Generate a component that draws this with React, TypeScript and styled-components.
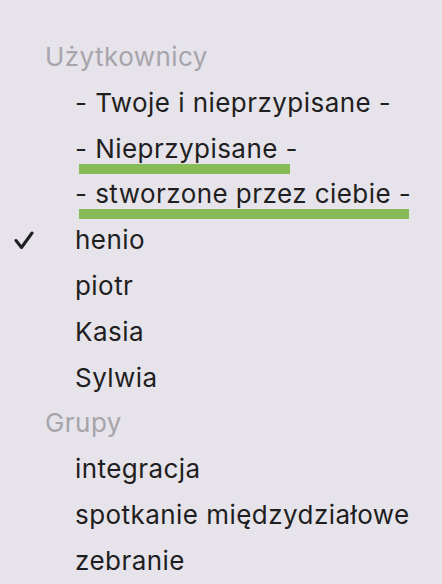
import React from "react";
import styled, { createGlobalStyle } from "styled-components";

const GlobalStyle = createGlobalStyle`
  html, body {
    margin: 0;
    padding: 0;
    background: #e6e3ea;
  }
  body {
    font-family: Inter, "Liberation Sans", sans-serif;
    -webkit-font-smoothing: antialiased;
  }
`;

type Entry = { label: string; checked?: boolean; mark?: number };

const users: Entry[] = [
  { label: "- Twoje i nieprzypisane -" },
  { label: "- Nieprzypisane -", mark: 211 },
  { label: "- stworzone przez ciebie -", mark: 330 },
  { label: "henio", checked: true },
  { label: "piotr" },
  { label: "Kasia" },
  { label: "Sylwia" },
];

const groups: Entry[] = [
  { label: "integracja" },
  { label: "spotkanie międzydziałowe" },
  { label: "zebranie" },
];

const App = () => {
  return (
    <>
      <GlobalStyle />
      <Menu>
        <Header>Użytkownicy</Header>
        {users.map((u) => (
          <Item key={u.label}>
            <CheckCell>
              {u.checked && (
                <svg width="20" height="19" viewBox="0 0 20 19">
                  <polyline
                    points="2,9.5 7.5,16.5 18,2"
                    fill="none"
                    stroke="#1f1e21"
                    strokeWidth="3"
                    strokeLinecap="round"
                    strokeLinejoin="round"
                  />
                </svg>
              )}
            </CheckCell>
            <Label>
              {u.label}
              {u.mark && <Highlight $width={u.mark} />}
            </Label>
          </Item>
        ))}
        <Header>Grupy</Header>
        {groups.map((g) => (
          <Item key={g.label}>
            <CheckCell />
            <Label>{g.label}</Label>
          </Item>
        ))}
      </Menu>
    </>
  );
};

const Menu = styled.div`
  display: flex;
  flex-direction: column;
  padding-top: 34px;
  width: 442px;
  height: 584px;
  box-sizing: border-box;
  overflow: hidden;
`;

const Header = styled.div`
  height: 45.8px;
  line-height: 45.8px;
  padding-left: 45px;
  font-size: 26px;
  letter-spacing: 0.45px;
  color: #a7a5ab;
  white-space: nowrap;
`;

const Item = styled.div`
  display: flex;
  align-items: center;
  height: 45.8px;
  font-size: 26px;
  letter-spacing: 0.45px;
  color: #1f1e21;
  white-space: nowrap;
`;

const CheckCell = styled.div`
  width: 75px;
  flex: none;
  display: flex;
  align-items: center;
  padding-left: 14px;
  box-sizing: border-box;
  svg {
    margin-top: 1px;
  }
`;

const Label = styled.span`
  position: relative;
  line-height: 45.8px;
`;

const Highlight = styled.span<{ $width: number }>`
  position: absolute;
  left: 4px;
  top: 38px;
  width: ${(p) => p.$width}px;
  height: 10px;
  background: #86bb56;
`;

export default App;
